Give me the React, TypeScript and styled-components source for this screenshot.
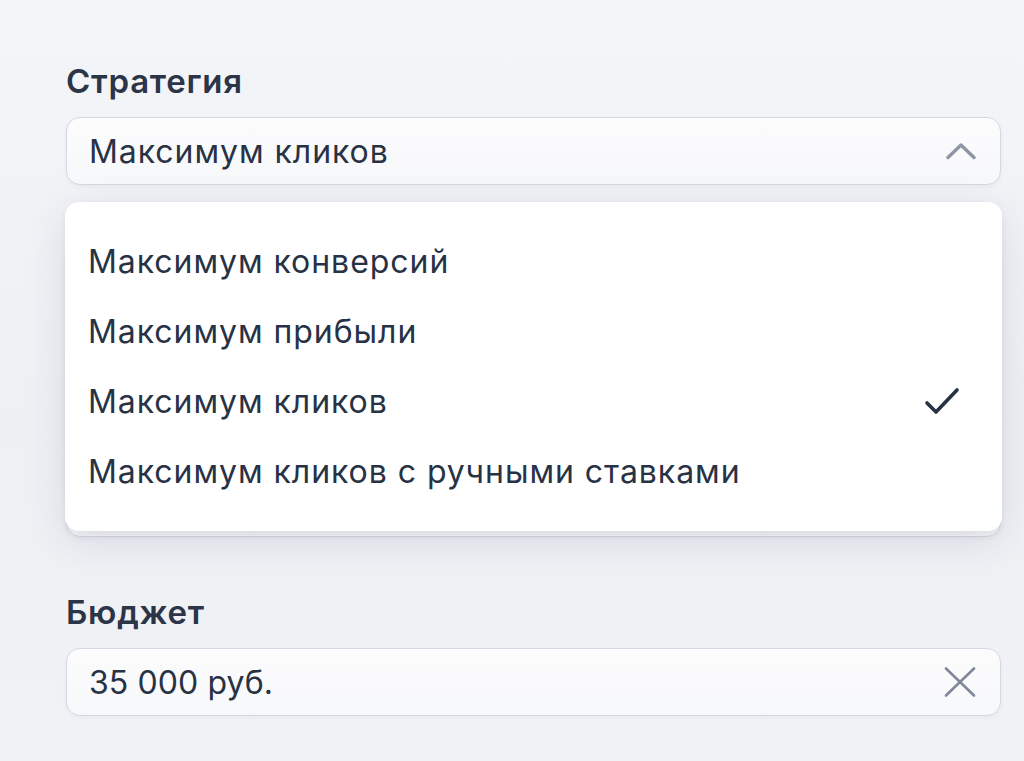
import React from "react";
import styled, { createGlobalStyle } from "styled-components";

const Global = createGlobalStyle`
  html, body { margin: 0; padding: 0; }
  body {
    min-height: 761px;
    background: linear-gradient(180deg, #f4f5f8 0%, #eef0f4 55%, #f1f2f6 100%);
    font-family: Inter, "Noto Sans", "Liberation Sans", sans-serif;
    color: #283245;
    overflow: hidden;
  }
`;

const Page = styled.div`
  padding: 62px 23px 0 66px;
  width: 935px;
`;

const Form = styled.div`
  display: flex;
  flex-direction: column;
  gap: 56px;
`;

const Group = styled.div`
  display: flex;
  flex-direction: column;
  gap: 17px;
`;

const Label = styled.div`
  font-size: 33px;
  line-height: 38px;
  font-weight: 600;
  color: #2c3548;
  letter-spacing: 0.75px;
`;

const SelectWrap = styled.div`
  position: relative;
`;

const Field = styled.div<{ $height?: number }>`
  box-sizing: border-box;
  height: ${(p) => p.$height ?? 68}px;
  display: flex;
  align-items: center;
  justify-content: space-between;
  padding: 0 24px 0 22px;
  border: 1.5px solid #d4d8e2;
  border-radius: 14px;
  background: linear-gradient(180deg, #fcfcfd 0%, #f7f8fa 100%);
  box-shadow: 0 2px 4px rgba(60, 70, 100, 0.05);
  font-size: 32px;
  color: #283245;
`;

const Value = styled.span<{ $numeric?: boolean }>`
  letter-spacing: ${(p) => (p.$numeric ? "0.1px" : "0.95px")};
`;

const Dropdown = styled.ul`
  position: absolute;
  left: -1px;
  right: -1px;
  top: calc(100% + 17px);
  z-index: 2;
  margin: 0;
  list-style: none;
  box-sizing: border-box;
  height: 329px;
  padding: 25px 0;
  background: #ffffff;
  border-radius: 14px;
  box-shadow: 0 10px 40px rgba(40, 50, 90, 0.12), 0 2px 6px rgba(40, 50, 90, 0.06);
  display: flex;
  flex-direction: column;
`;

const Item = styled.li`
  height: 70.5px;
  display: flex;
  align-items: center;
  justify-content: space-between;
  padding: 0 42px 0 23px;
  font-size: 32px;
  letter-spacing: 0.95px;
  color: #283245;
`;

const IconBtn = styled.span`
  display: flex;
  align-items: center;
  justify-content: center;
`;

const Chevron = () => (
  <svg width="30" height="18" viewBox="0 0 30 18" fill="none">
    <path d="M2 15.5 L15 3 L28 15.5" stroke="#8d95a7" strokeWidth="3.4" strokeLinecap="round" strokeLinejoin="round" />
  </svg>
);

const Check = () => (
  <svg width="36" height="30" viewBox="0 0 36 30" fill="none">
    <path d="M3 17 L12 26 L33 4" stroke="#283245" strokeWidth="3.6" strokeLinecap="round" strokeLinejoin="round" />
  </svg>
);

const Cross = () => (
  <svg width="32" height="30" viewBox="0 0 32 30" fill="none">
    <path d="M2 1.5 L30 28.5 M30 1.5 L2 28.5" stroke="#7f889b" strokeWidth="2.6" strokeLinecap="round" />
  </svg>
);

const options = [
  "Максимум конверсий",
  "Максимум прибыли",
  "Максимум кликов",
  "Максимум кликов с ручными ставками",
];

export default function App() {
  const selected = "Максимум кликов";
  return (
    <>
      <Global />
      <Page>
        <Form>
          <Group>
            <Label>Стратегия</Label>
            <SelectWrap>
              <Field>
                <Value>{selected}</Value>
                <IconBtn>
                  <Chevron />
                </IconBtn>
              </Field>
              <Dropdown>
                {options.map((o) => (
                  <Item key={o}>
                    <span>{o}</span>
                    {o === selected && <Check />}
                  </Item>
                ))}
              </Dropdown>
            </SelectWrap>
          </Group>
          <Field $height={296} aria-hidden />
          <Group>
            <Label>Бюджет</Label>
            <Field>
              <Value $numeric>35 000 руб.</Value>
              <IconBtn>
                <Cross />
              </IconBtn>
            </Field>
          </Group>
        </Form>
      </Page>
    </>
  );
}
